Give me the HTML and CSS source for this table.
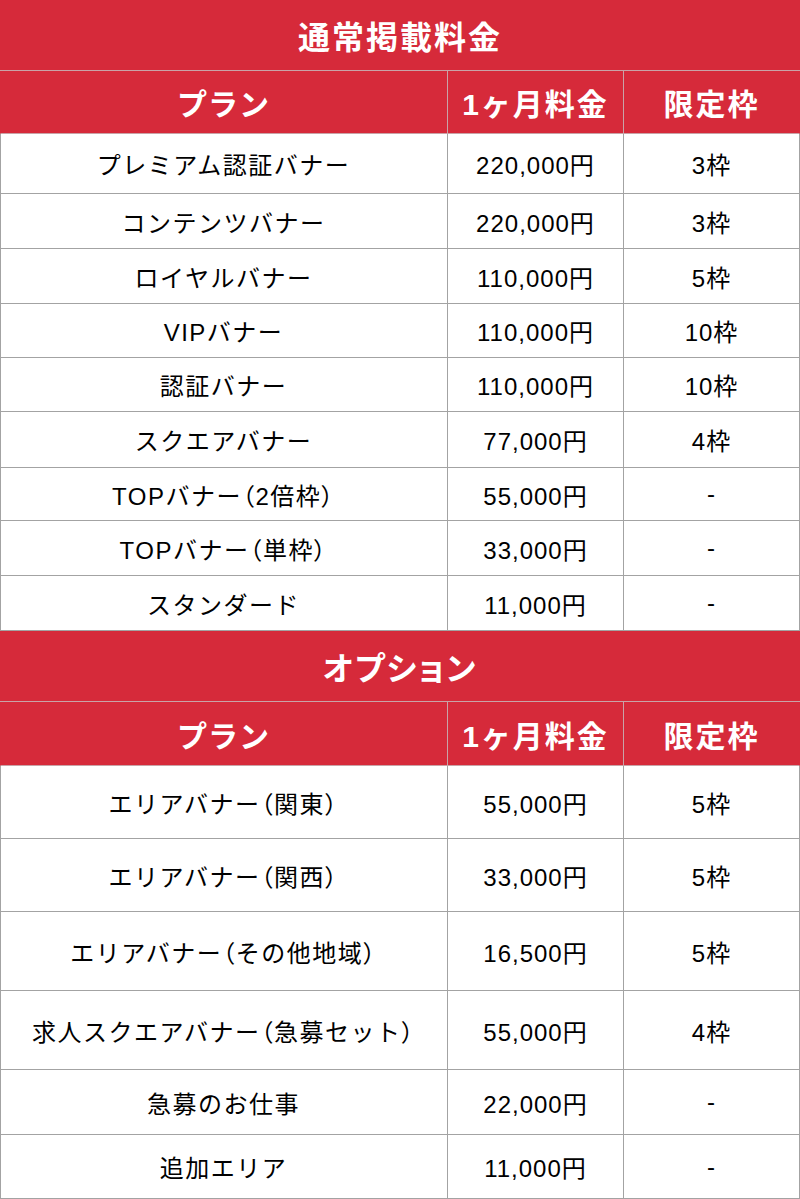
FILE: index.html
```html
<!DOCTYPE html>
<html lang="ja">
<head>
<meta charset="utf-8">
<link rel="stylesheet" href="styles.css">
</head>
<body>
<div class="sheet">
  <section class="block">
    <div class="title h71">通常掲載料金</div>
    <div class="row head h63"><div class="c">プラン</div><div class="c">1ヶ月料金</div><div class="c">限定枠</div></div>
    <div class="row h60"><div class="c">プレミアム認証バナー</div><div class="c">220,000円</div><div class="c">3枠</div></div>
    <div class="row h55"><div class="c">コンテンツバナー</div><div class="c">220,000円</div><div class="c">3枠</div></div>
    <div class="row h55"><div class="c">ロイヤルバナー</div><div class="c">110,000円</div><div class="c">5枠</div></div>
    <div class="row h54"><div class="c">VIPバナー</div><div class="c">110,000円</div><div class="c">10枠</div></div>
    <div class="row h54"><div class="c">認証バナー</div><div class="c">110,000円</div><div class="c">10枠</div></div>
    <div class="row h56"><div class="c">スクエアバナー</div><div class="c">77,000円</div><div class="c">4枠</div></div>
    <div class="row h53"><div class="c">TOPバナー<span class="pa">（</span>2倍枠<span class="pa">）</span></div><div class="c">55,000円</div><div class="c">-</div></div>
    <div class="row h55"><div class="c">TOPバナー<span class="pa">（</span>単枠<span class="pa">）</span></div><div class="c">33,000円</div><div class="c">-</div></div>
    <div class="row h55"><div class="c">スタンダード</div><div class="c">11,000円</div><div class="c">-</div></div>
  </section>
  <section class="block">
    <div class="title h71">オプション</div>
    <div class="row head h64"><div class="c">プラン</div><div class="c">1ヶ月料金</div><div class="c">限定枠</div></div>
    <div class="row h73"><div class="c">エリアバナー<span class="pa">（</span>関東<span class="pa">）</span></div><div class="c">55,000円</div><div class="c">5枠</div></div>
    <div class="row h73"><div class="c">エリアバナー<span class="pa">（</span>関西<span class="pa">）</span></div><div class="c">33,000円</div><div class="c">5枠</div></div>
    <div class="row h79"><div class="c">エリアバナー<span class="pa">（</span>その他地域<span class="pa">）</span></div><div class="c">16,500円</div><div class="c">5枠</div></div>
    <div class="row h79"><div class="c">求人スクエアバナー<span class="pa">（</span>急募セット<span class="pa">）</span></div><div class="c">55,000円</div><div class="c">4枠</div></div>
    <div class="row h65"><div class="c">急募のお仕事</div><div class="c">22,000円</div><div class="c">-</div></div>
    <div class="row h64"><div class="c">追加エリア</div><div class="c">11,000円</div><div class="c">-</div></div>
  </section>
</div>
</body>
</html>
```

FILE: styles.css
```css
html, body {
  margin: 0;
  padding: 0;
  background: #ffffff;
}
body {
  font-family: "Liberation Sans", "Noto Sans CJK JP", sans-serif;
  color: #000;
}
.sheet {
  width: 800px;
  display: flex;
  flex-direction: column;
}
.block {
  display: flex;
  flex-direction: column;
}
.title {
  box-sizing: border-box;
  background: #d62a3a;
  color: #fff;
  font-weight: bold;
  font-size: 32px;
  letter-spacing: 2px;
  font-feature-settings: "palt";
  display: flex;
  align-items: center;
  justify-content: center;
  border-bottom: 1px solid #c9a3a7;
}
.row {
  box-sizing: border-box;
  display: grid;
  grid-template-columns: 447px 176px 1fr;
  border-bottom: 1px solid #a3a3a3;
  border-left: 1px solid #a3a3a3;
  border-right: 1px solid #a3a3a3;
}
.row .c {
  display: flex;
  align-items: center;
  justify-content: center;
  font-size: 24px;
  letter-spacing: 1px;
  border-right: 1px solid #a3a3a3;
  white-space: nowrap;
}
.row .c:first-child {
  margin-left: -1px;
  letter-spacing: 1.5px;
}
.row .c:last-child {
  border-right: none;
}
.pa {
  font-feature-settings: "palt";
}
.row.head {
  background: #d62a3a;
  color: #fff;
  border-left-color: #d62a3a;
  border-right-color: #d62a3a;
  border-bottom-color: #c9a3a7;
}
.row.head .c {
  font-weight: bold;
  font-size: 30px;
  letter-spacing: 2px;
  border-right-color: #c9a3a7;
}
.row.head .c:first-child {
  letter-spacing: 1px;
}
.h53 { height: 53px; }
.h54 { height: 54px; }
.h55 { height: 55px; }
.h56 { height: 56px; }
.h60 { height: 60px; }
.h63 { height: 63px; }
.h64 { height: 64px; }
.h65 { height: 65px; }
.h71 { height: 71px; }
.h73 { height: 73px; }
.h79 { height: 79px; }
```
